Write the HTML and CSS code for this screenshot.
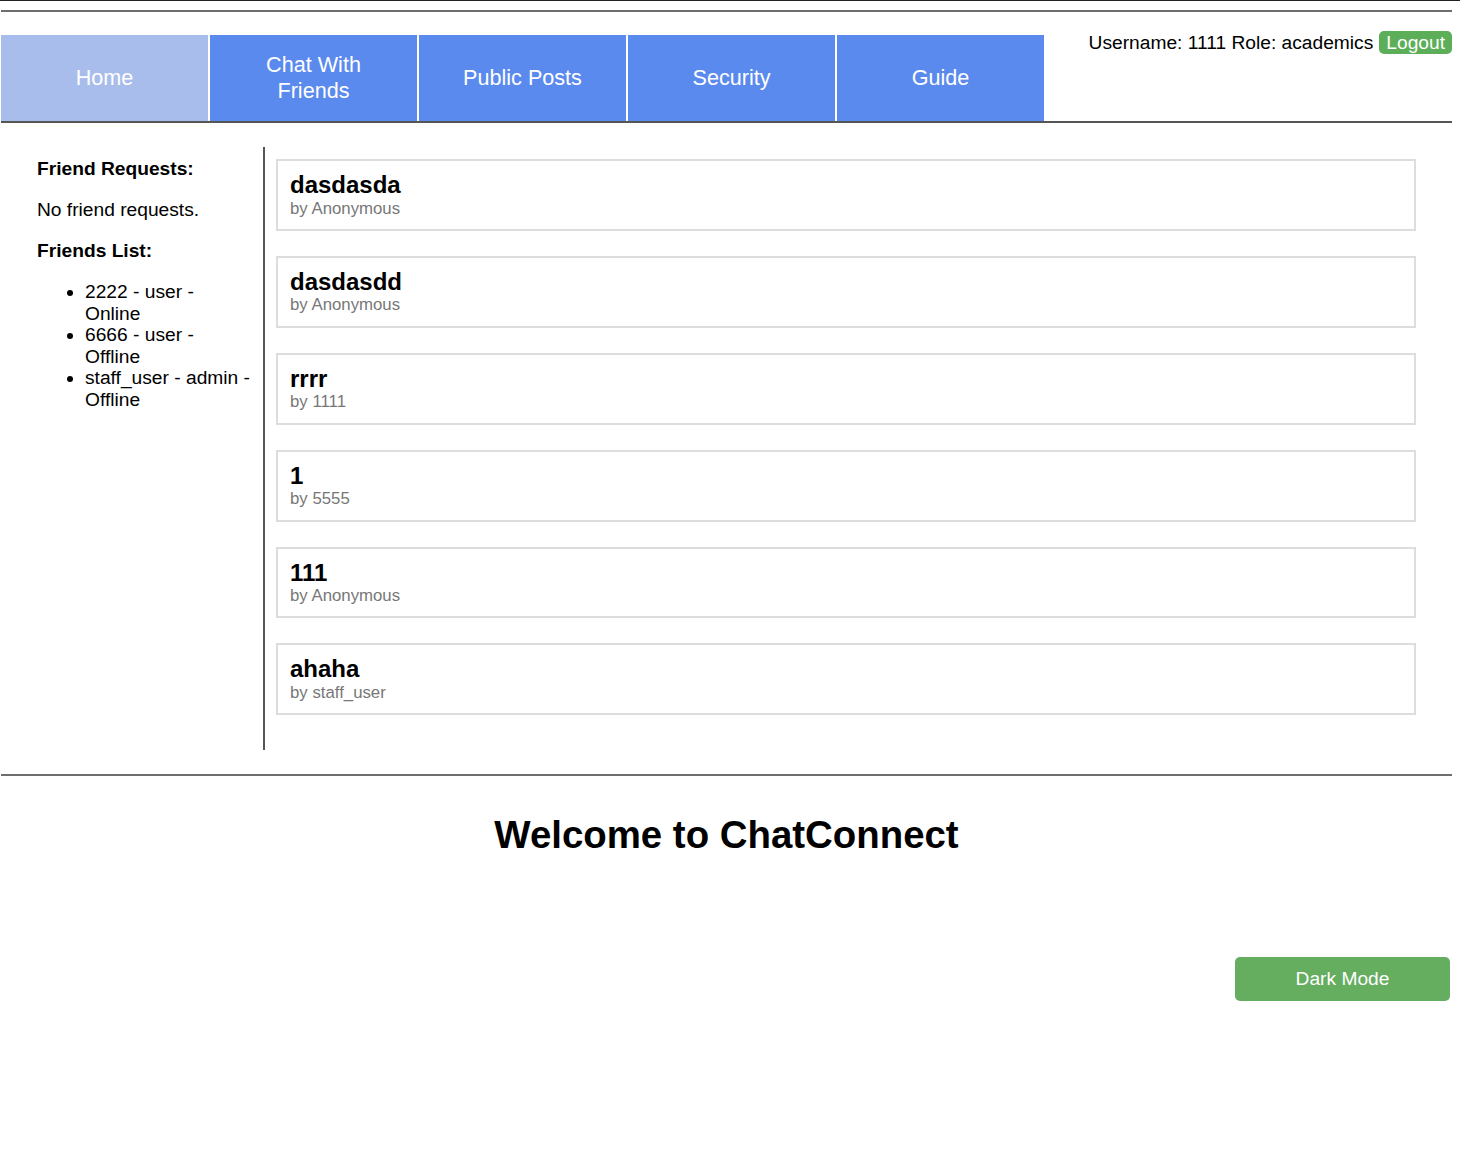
FILE: index.html
```html
<!DOCTYPE html>
<html lang="en">
<head>
<meta charset="utf-8">
<title>ChatConnect</title>
<link rel="stylesheet" href="styles.css">
</head>
<body>
<div class="topline"></div>
<div class="page">
  <hr class="rule rule-top">
  <header class="header">
    <nav class="nav">
      <a class="tab tab-active" href="#">Home</a>
      <a class="tab" href="#">Chat With<br>Friends</a>
      <a class="tab" href="#">Public Posts</a>
      <a class="tab" href="#">Security</a>
      <a class="tab" href="#">Guide</a>
    </nav>
    <div class="userinfo">
      <span>Username: 1111 Role: academics</span>
      <button class="logout">Logout</button>
    </div>
  </header>

  <div class="content">
    <aside class="sidebar">
      <p class="label">Friend Requests:</p>
      <p class="text">No friend requests.</p>
      <p class="label">Friends List:</p>
      <ul class="friends">
        <li>2222 - user - Online</li>
        <li>6666 - user - Offline</li>
        <li>staff_user - admin - Offline</li>
      </ul>
    </aside>
    <main class="posts">
      <div class="post"><div class="post-title">dasdasda</div><div class="post-by">by Anonymous</div></div>
      <div class="post"><div class="post-title">dasdasdd</div><div class="post-by">by Anonymous</div></div>
      <div class="post"><div class="post-title">rrrr</div><div class="post-by">by 1111</div></div>
      <div class="post"><div class="post-title">1</div><div class="post-by">by 5555</div></div>
      <div class="post"><div class="post-title">111</div><div class="post-by">by Anonymous</div></div>
      <div class="post"><div class="post-title">ahaha</div><div class="post-by">by staff_user</div></div>
    </main>
  </div>

  <hr class="rule rule-bottom">
  <h1 class="welcome">Welcome to ChatConnect</h1>
  <div class="actions">
    <button class="darkmode">Dark Mode</button>
  </div>
</div>
</body>
</html>
```

FILE: styles.css
```css
html, body {
  margin: 0;
  padding: 0;
  background: #fff;
}

body {
  font-family: "Liberation Sans", Arial, sans-serif;
  font-size: 19.2px;
  color: #000;
}

.topline {
  height: 1px;
  background: #222;
}

.page {
  padding: 0 8px 0 1px;
}

.rule {
  margin: 0;
  height: 0;
  border: 0;
  border-top: 2px solid #6e6e6e;
}

.rule-top {
  margin-top: 9px;
}

.header {
  display: flex;
  justify-content: space-between;
  align-items: flex-start;
  border-bottom: 2px solid #555;
  margin-top: 23px;
}

.nav {
  display: flex;
}

.tab {
  width: 207px;
  height: 86px;
  margin-right: 2px;
  background: #5b8aee;
  color: #fff;
  text-decoration: none;
  font-size: 21.6px;
  display: flex;
  align-items: center;
  justify-content: center;
  text-align: center;
}

.tab:last-child {
  margin-right: 0;
}

.tab-active {
  background: #a8bdec;
}

.userinfo {
  margin-top: -4px;
  display: flex;
  align-items: center;
  gap: 6px;
  line-height: 22px;
}

.logout {
  font-family: inherit;
  font-size: 19.2px;
  line-height: 21px;
  padding: 1px 7px;
  border: 0;
  border-radius: 5px;
  background: #5cae58;
  color: #fff;
}

.content {
  display: flex;
  margin-top: 24px;
}

.sidebar {
  width: 215px;
  flex: none;
  padding: 11px 11px 0 36px;
  border-right: 2px solid #555;
  line-height: 22px;
}

.label {
  margin: 0 0 19px;
  font-weight: bold;
}

.text {
  margin: 0 0 19px;
}

.friends {
  margin: 0;
  padding-left: 48px;
  line-height: 21.5px;
}

.posts {
  width: 1140px;
  padding: 12px 0 10px 11px;
}

.post {
  border: 2px solid #ddd;
  padding: 10px 12px 11px;
  margin-bottom: 25px;
}

.post-title {
  font-size: 24px;
  font-weight: bold;
  line-height: 27.6px;
}

.post-by {
  font-size: 16.8px;
  line-height: 19.3px;
  color: #777;
}

.rule-bottom {
  margin-top: 24px;
}

.welcome {
  margin: 37px 0 0;
  text-align: center;
  font-size: 38.4px;
  line-height: 44px;
}

.actions {
  display: flex;
  justify-content: flex-end;
  margin-top: 100px;
  padding-right: 2px;
}

.darkmode {
  width: 215px;
  height: 44px;
  font-family: inherit;
  font-size: 19.2px;
  border: 0;
  border-radius: 5px;
  background: #65ad5f;
  color: #fff;
}
```
